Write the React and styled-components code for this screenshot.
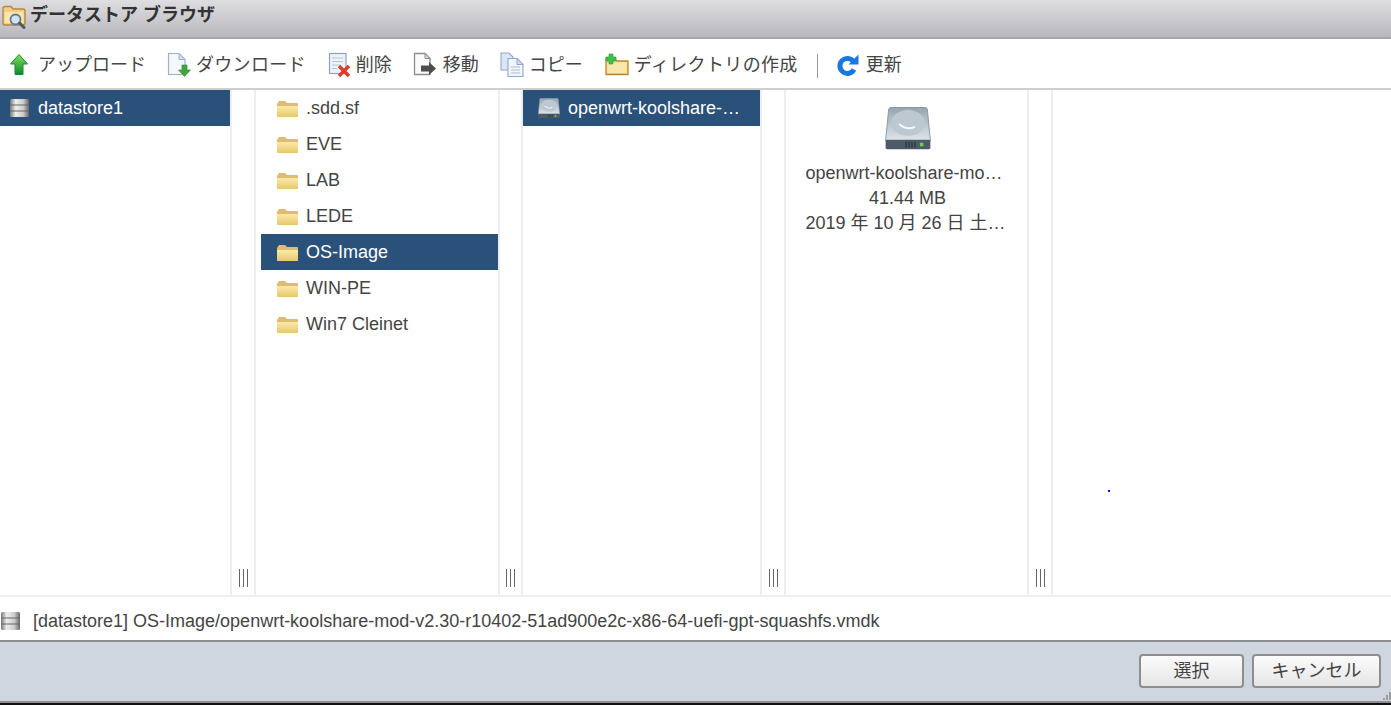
import React from "react";
import styled, { createGlobalStyle } from "styled-components";

const Global = createGlobalStyle`
  html, body { margin: 0; padding: 0; background: #fff; }
  * { box-sizing: border-box; }
`;

const FONT = `"Liberation Sans", "Noto Sans CJK JP", sans-serif`;

const Dialog = styled.div`
  width: 1391px; height: 705px; display: flex; flex-direction: column;
  overflow: hidden; position: relative; background: #fff;
  font-family: ${FONT}; font-size: 18px; color: #444;
`;
const TitleBar = styled.header`
  height: 39px; flex: none; display: flex; align-items: flex-start; gap: 1px;
  padding: 3px 0 0 1px;
  background: linear-gradient(#dedee1, #b9b9bd);
  border-bottom: 2px solid #a6a6a8;
`;
const TitleText = styled.span`
  font-weight: 700; font-size: 18px; line-height: 24px; color: #333; white-space: pre;
`;
const Toolbar = styled.nav`
  height: 49px; flex: none; display: flex; align-items: center; padding: 2px 0 0 9px;
`;
const Tool = styled.div`
  display: flex; align-items: center; gap: ${p => p.$gap ?? 6}px; margin-right: ${p => p.$mr ?? 21}px;
  white-space: nowrap; line-height: 24px; letter-spacing: ${p => p.$ls ?? 0}px;
`;
const Divider = styled.span`
  width: 1px; height: 24px; background: #9a9a9a; margin: 2px 18px 0 -2px;
`;
const Browser = styled.main`
  flex: 1; min-height: 0; display: flex; border-top: 2px solid #cfcfcf; border-bottom: 2px solid #eee;
`;
const Column = styled.section`
  width: ${p => p.$w}px; flex: ${p => (p.$grow ? 1 : "none")};
  display: flex; flex-direction: column; padding-left: ${p => p.$pl ?? 0}px;
`;
const Row = styled.div`
  height: 36px; flex: none; display: flex; align-items: center;
  gap: ${p => p.$gap ?? 7}px; padding-left: ${p => p.$pad ?? 15}px; white-space: nowrap; overflow: hidden;
  background: ${p => (p.$sel ? "#2a5179" : "transparent")};
  color: ${p => (p.$sel ? "#fff" : "#444")};
`;
const Grip = styled.div`
  width: ${p => p.$w ?? 25}px; flex: none; display: flex; justify-content: center; align-items: flex-end;
  gap: 3px; padding-bottom: 8px;
  border-left: 2px solid #eee; border-right: 2px solid #eee;
`;
const GripBar = styled.i`
  display: block; width: 1px; height: 18px; background: #666;
`;
const Preview = styled.section`
  width: 241px; flex: none; display: flex; flex-direction: column; align-items: center; padding: 17px 0 0 2px;
`;
const PreviewLine = styled.div`
  width: 204px; text-align: ${p => p.$align ?? "center"}; line-height: 25px; white-space: nowrap;
  margin-top: ${p => p.$mt ?? 0}px;
`;
const PathBar = styled.div`
  height: 43px; flex: none; display: flex; align-items: center; gap: 11px; padding: 5px 0 0 0; line-height: 24px;
`;
const Footer = styled.footer`
  height: 63px; flex: none; display: flex; justify-content: flex-end; gap: 8px; padding: 12px 10px 0 0;
  background: #cfd6df; border-top: 2px solid #8f8f8f; border-bottom: 2px solid #8f8f8f;
`;
const Button = styled.button`
  width: ${p => p.$w}px; height: 34px; border: 2px solid #8e8e8e; border-radius: 4px;
  background: linear-gradient(#fbfbfb, #e6e6e6); font: inherit; font-size: 18px; color: #444; padding: 0 0 6px;
`;
const BlackEdge = styled.div`
  height: 2px; flex: none; background: #111;
`;
const Speck = styled.i`
  position: absolute; left: 1108px; top: 490px; width: 2px; height: 2px; background: #00f;
`;
const ResizeHandle = styled.svg`
  position: absolute; right: 0; bottom: 4px;
`;

const TitleIcon = () => (
  <svg width="28" height="28" viewBox="0 0 28 28">
    <path d="M2 6 V20 a2 2 0 0 0 2 2 H22 a2 2 0 0 0 2-2 V8 a2 2 0 0 0-2-2 H12 L10 3.500 H4 a2 2 0 0 0-2 2.500Z" fill="#f0cf86" stroke="#b9873c" strokeWidth="1.400" />
    <path d="M3.500 9 H22.500 V20 H3.500Z" fill="#f7e5b2" />
    <circle cx="14.500" cy="16.500" r="5" fill="#cfe3f3" stroke="#62788c" strokeWidth="1.800" />
    <path d="M18.500 20 L23 24.500" stroke="#4b5a68" strokeWidth="3" strokeLinecap="round" />
  </svg>
);
const UploadIcon = () => (
  <svg width="20" height="24" viewBox="0 0 20 24">
    <defs><linearGradient id="u" x1="0" y1="0" x2="0" y2="1"><stop offset="0" stopColor="#7fe05a" /><stop offset="1" stopColor="#0c8a2e" /></linearGradient></defs>
    <path d="M10 1.500 L18.500 11 H14 V21.500 H6 V11 H1.500Z" fill="url(#u)" stroke="#1c8a35" strokeWidth="1" strokeLinejoin="round" />
  </svg>
);
const Page = ({ children, fold = true }) => (
  <svg width="24" height="26" viewBox="0 0 24 26">
    <path d="M1.500 1.500 H12 L18 7.500 V22.500 H1.500Z" fill="#f4f7fb" stroke="#9bb2cf" strokeWidth="1.200" />
    {fold && <path d="M12 1.500 V7.500 H18Z" fill="#d6e2f0" stroke="#9bb2cf" strokeWidth="1" />}
    {children}
  </svg>
);
const DownloadIcon = () => (
  <Page>
    <path d="M15 13 H20 V18 H23.500 L17.500 24.500 L11.500 18 H15Z" fill="#3fa83a" stroke="#2a8a2a" strokeWidth=".6" />
  </Page>
);
const DeleteIcon = () => (
  <svg width="24" height="26" viewBox="0 0 24 26">
    <rect x="1.500" y="1.500" width="16.500" height="20" fill="#eef3f9" stroke="#8fa3bb" strokeWidth="1.200" />
    <path d="M4 6h11M4 9.500h11M4 13h8M4 16.500h5" stroke="#b6c5d6" strokeWidth="1.200" />
    <path d="M11 14 L21 24 M21 14 L11 24" stroke="#df3b2c" strokeWidth="3.400" />
  </svg>
);
const MoveIcon = () => (
  <svg width="24" height="26" viewBox="0 0 24 26">
    <path d="M1.500 1.500 H12 L17 6.500 V22.500 H1.500Z" fill="#fafafa" stroke="#8d8d8d" strokeWidth="1.300" />
    <path d="M12 1.500 V6.500 H17Z" fill="#ddd" stroke="#8d8d8d" />
    <path d="M8 13.500 H16 V10 L23 16.500 L16 23 V19.500 H8Z" fill="#4d4d4d" />
  </svg>
);
const CopyIcon = () => (
  <svg width="24" height="26" viewBox="0 0 24 26">
    <path d="M1 1 H9 L13 5 V18 H1Z" fill="#dce7f3" stroke="#8fa9c9" strokeWidth="1.100" />
    <path d="M8 6.500 H17 L23 12.500 V24.500 H8Z" fill="#f2f6fb" stroke="#8fa9c9" strokeWidth="1.100" />
    <path d="M17 6.500 V12.500 H23Z" fill="#cfdced" stroke="#8fa9c9" />
    <path d="M11 15h9M11 18h9M11 21h9" stroke="#a8bdd6" />
  </svg>
);
const NewFolderIcon = () => (
  <svg width="24" height="24" viewBox="0 0 24 24">
    <path d="M1 6 H10 L12 8 H23 V21.500 H1Z" fill="#f6d788" stroke="#b98a2e" strokeWidth="1.300" />
    <path d="M2.500 9.500 H21.500 V20 H2.500Z" fill="#fae7ad" />
    <path d="M4 1 H8 V4 H11 V8 H8 V11 H4 V8 H1 V4 H4Z" fill="#3cc04a" stroke="#219a33" strokeWidth=".6" />
  </svg>
);
const RefreshIcon = () => (
  <svg width="24" height="24" viewBox="0 0 24 24">
    <path d="M17.500 8.500 A7.500 7.500 0 1 0 18 16.500" fill="none" stroke="#1878de" strokeWidth="5" />
    <path d="M22.500 1.500 V11.500 H12.500Z" fill="#1878de" />
  </svg>
);
const DatastoreIcon = () => (
  <svg width="22" height="20" viewBox="0 0 22 20">
    <defs>
      <linearGradient id="d" x1="0" y1="0" x2="1" y2="0">
        <stop offset="0" stopColor="#777" /><stop offset=".3" stopColor="#eee" /><stop offset=".7" stopColor="#ccc" /><stop offset="1" stopColor="#666" />
      </linearGradient>
    </defs>
    <rect x="1" y="1" width="19" height="18" rx="1.500" fill="url(#d)" />
    <path d="M1 7h19M1 13h19" stroke="#666" strokeWidth="1.200" />
  </svg>
);
const Folder = () => (
  <svg width="23" height="19" viewBox="0 0 23 19">
    <defs><linearGradient id="f" x1="0" y1="0" x2="0" y2="1"><stop offset="0" stopColor="#fbeaa6" /><stop offset="1" stopColor="#e6c86e" /></linearGradient></defs>
    <path d="M1 5 L3 2 H9 L11 4 H21 a1 1 0 0 1 1 1 V17 a1 1 0 0 1-1 1 H2 a1 1 0 0 1-1-1Z" fill="#dfba71" />
    <path d="M1 7 H22 V17 a1 1 0 0 1-1 1 H2 a1 1 0 0 1-1-1Z" fill="url(#f)" />
  </svg>
);
const Disk = ({ size = 22 }) => (
  <svg width={size} height={size * 0.93} viewBox="0 0 46 43">
    <defs>
      <linearGradient id="h" x1="0" y1="0" x2="0" y2="1"><stop offset="0" stopColor="#96a5b0" /><stop offset="1" stopColor="#dfe6ea" /></linearGradient>
    </defs>
    <path d="M3.500 3 a2.500 2.500 0 0 1 2.500-2.500 H40 a2.500 2.500 0 0 1 2.500 2.500 L45.500 34 H.500Z" fill="url(#h)" stroke="#8c99a3" />
    <ellipse cx="23" cy="16" rx="17" ry="13" fill="#bcc9d2" />
    <path d="M14 17 Q21 24 30 20" fill="none" stroke="#f4f8fa" strokeWidth="2" />
    <rect x=".500" y="33" width="45" height="9.500" rx="1.500" fill="#4d5b68" />
    <path d="M21 35v6M24 35v6M27 35v6M30 35v6" stroke="#29333c" strokeWidth="1.200" />
    <rect x="35" y="36" width="3.500" height="3.500" fill="#6fd13f" />
  </svg>
);

const folders = [".sdd.sf", "EVE", "LAB", "LEDE", "OS-Image", "WIN-PE", "Win7 Cleinet"];

const ResizeGrip = ({ w }) => (
  <Grip $w={w}><GripBar /><GripBar /><GripBar /></Grip>
);

export default function App() {
  return (
    <Dialog>
      <Global />
      <TitleBar>
        <TitleIcon />
        <TitleText>データストア ブラウザ</TitleText>
      </TitleBar>
      <Toolbar>
        <Tool $gap={9}><UploadIcon />アップロード</Tool>
        <Tool $gap={5} $mr={22} $ls={0.3}><DownloadIcon />ダウンロード</Tool>
        <Tool $gap={4}><DeleteIcon />削除</Tool>
        <Tool><MoveIcon />移動</Tool>
        <Tool $gap={5} $mr={22}><CopyIcon />コピー</Tool>
        <Tool $gap={5} $ls={0.35}><NewFolderIcon />ディレクトリの作成</Tool>
        <Divider />
        <Tool><RefreshIcon />更新</Tool>
      </Toolbar>
      <Browser>
        <Column $w={230}>
          <Row $sel $pad={9} $gap={7}><DatastoreIcon />datastore1</Row>
        </Column>
        <ResizeGrip w={26} />
        <Column $w={242} $pl={5}>
          {folders.map(name => (
            <Row key={name} $sel={name === "OS-Image"}><Folder />{name}</Row>
          ))}
        </Column>
        <ResizeGrip w={25} />
        <Column $w={237}>
          <Row $sel $gap={8}><Disk />openwrt-koolshare-…</Row>
        </Column>
        <ResizeGrip w={26} />
        <Preview>
          <Disk size={46} />
          <PreviewLine $mt={11} $align="left">openwrt-koolshare-mo…</PreviewLine>
          <PreviewLine>41.44 MB</PreviewLine>
          <PreviewLine $align="left">2019 年 10 月 26 日 土…</PreviewLine>
        </Preview>
        <ResizeGrip w={26} />
        <Column $grow />
      </Browser>
      <PathBar>
        <DatastoreIcon />
        [datastore1] OS-Image/openwrt-koolshare-mod-v2.30-r10402-51ad900e2c-x86-64-uefi-gpt-squashfs.vmdk
      </PathBar>
      <Footer>
        <Button $w={105}>選択</Button>
        <Button $w={129}>キャンセル</Button>
      </Footer>
      <BlackEdge />
      <Speck />
      <ResizeHandle width="10" height="10" viewBox="0 0 10 10">
        <path d="M9 1v8M6 4v5M3 7v2" stroke="#8a8a8a" strokeWidth="1.500" />
      </ResizeHandle>
    </Dialog>
  );
}
